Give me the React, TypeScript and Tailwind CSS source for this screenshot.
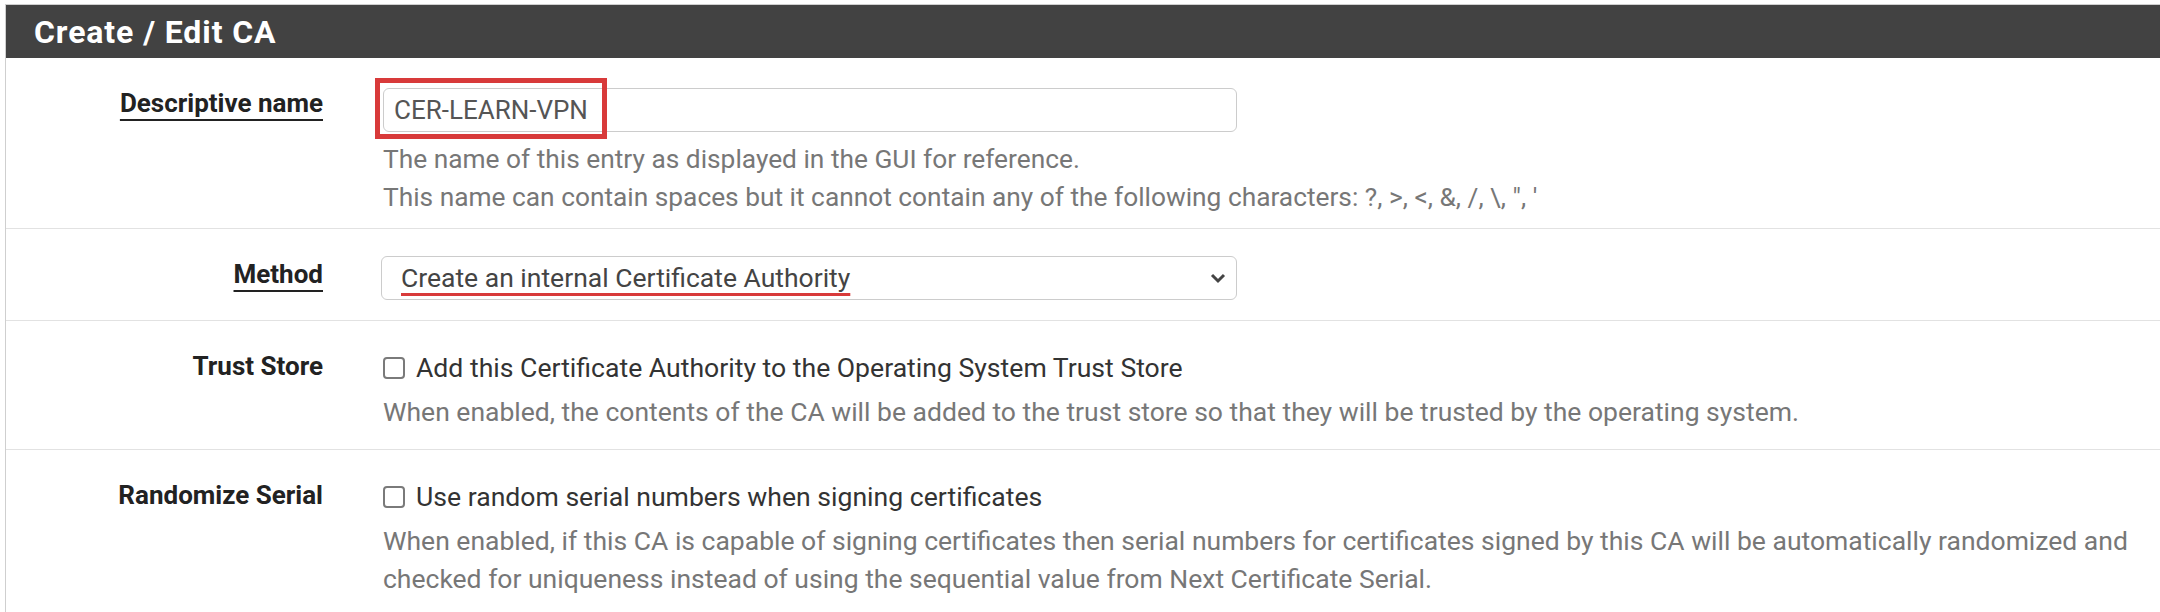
// pfSense-style "Create / Edit CA" form panel, zoomed browser view.

function Label({ text, underline = false }: { text: string; underline?: boolean }) {
  return (
    <div className="w-[317px] shrink-0 pt-[26px] text-right text-[26px] leading-[38px] font-bold text-[#222222]">
      <span className={underline ? "underline decoration-[2px] underline-offset-[7px]" : ""}>{text}</span>
    </div>
  );
}

function Checkbox() {
  return <div className="w-[22px] h-[22px] shrink-0 rounded-[4px] border-2 border-[#7a7a7a] bg-white" />;
}

export default function App() {
  return (
    <div className="w-[2160px] h-[612px] overflow-hidden bg-white font-['Roboto',sans-serif]">
      <div className="ml-[5px] mt-[4px] border-l border-t border-[#cfcfcf]">
        {/* ── Panel heading ── */}
        <div className="h-[53px] bg-[#424242] pl-[28px] flex items-center">
          <span className="text-white text-[32px] font-bold tracking-[0.9px]">Create / Edit CA</span>
        </div>

        {/* ── Descriptive name ── */}
        <div className="flex border-b border-[#e2e2e2]">
          <Label text="Descriptive name" underline />
          <div className="ml-[60px] flex-1 pt-[30px] pb-[12px]">
            <div className="relative w-[854px]">
              <div className="h-[44px] rounded-[6px] border border-[#cccccc] flex items-center pl-[10px] text-[26px] text-[#555555]">
                CER-LEARN-VPN
              </div>
              {/* highlight box */}
              <div className="absolute left-[-8px] top-[-10px] w-[232px] h-[61px] border-[5px] border-[#d83a3a]" />
            </div>
            <div className="mt-[8px] text-[26.3px] leading-[38px] text-[#777777]">
              <div>The name of this entry as displayed in the GUI for reference.</div>
              <div>This name can contain spaces but it cannot contain any of the following characters: ?, &gt;, &lt;, &amp;, /, \, ", '</div>
            </div>
          </div>
        </div>

        {/* ── Method ── */}
        <div className="flex border-b border-[#e2e2e2]">
          <Label text="Method" underline />
          <div className="ml-[58px] flex-1 pt-[27px] pb-[20px]">
            <div className="w-[856px] h-[44px] rounded-[6px] border border-[#cccccc] flex items-center justify-between pl-[19px] pr-[10px] text-[26.5px] text-[#444444]">
              <span className="underline decoration-[#d83a3a] decoration-[3px] underline-offset-[6px]">
                Create an internal Certificate Authority
              </span>
              <svg width="16" height="12" viewBox="0 0 16 12">
                <polyline points="2,3 8,9 14,3" fill="none" stroke="#444" strokeWidth="3" />
              </svg>
            </div>
          </div>
        </div>

        {/* ── Trust Store ── */}
        <div className="flex border-b border-[#e2e2e2]">
          <Label text="Trust Store" />
          <div className="ml-[60px] flex-1 pt-[28px] pb-[18px]">
            <div className="flex items-center gap-[11px] h-[38px] text-[26.6px] text-[#333333]">
              <Checkbox />
              <span>Add this Certificate Authority to the Operating System Trust Store</span>
            </div>
            <div className="mt-[6px] text-[26.5px] leading-[38px] text-[#777777]">
              When enabled, the contents of the CA will be added to the trust store so that they will be trusted by the operating system.
            </div>
          </div>
        </div>

        {/* ── Randomize Serial ── */}
        <div className="flex">
          <Label text="Randomize Serial" />
          <div className="ml-[60px] flex-1 pt-[28px] pb-[18px] pr-[10px]">
            <div className="flex items-center gap-[11px] h-[38px] text-[26.6px] text-[#333333]">
              <Checkbox />
              <span>Use random serial numbers when signing certificates</span>
            </div>
            <div className="mt-[6px] text-[26.5px] leading-[38px] text-[#777777]">
              <div className="whitespace-nowrap">When enabled, if this CA is capable of signing certificates then serial numbers for certificates signed by this CA will be automatically randomized and</div>
              <div>checked for uniqueness instead of using the sequential value from Next Certificate Serial.</div>
            </div>
          </div>
        </div>
      </div>
    </div>
  );
}
